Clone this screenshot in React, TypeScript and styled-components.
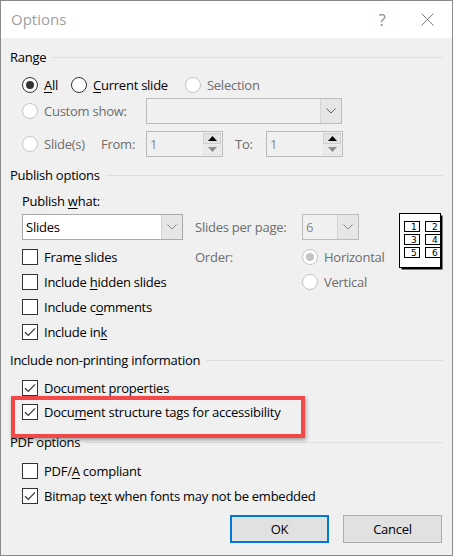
import React from 'react';
import styled, { createGlobalStyle } from 'styled-components';

const GlobalStyle = createGlobalStyle`
  html, body {
    margin: 0;
    padding: 0;
    background: #ffffff;
  }
  * {
    box-sizing: border-box;
  }
`;

const FONT = `"Open Sans", "Noto Sans", "Liberation Sans", sans-serif`;

const Window = styled.div`
  width: 453px;
  height: 556px;
  border: 1px solid #8a8a8a;
  background: #f0f0f0;
  font-family: ${FONT};
  font-size: 13px;
  letter-spacing: -0.25px;
  color: #000;
  display: flex;
  flex-direction: column;
  overflow: hidden;
`;

const TitleBar = styled.div`
  height: 37px;
  background: #ffffff;
  display: flex;
  align-items: center;
  padding-left: 10px;
  flex-shrink: 0;
`;

const Title = styled.div`
  flex: 1;
  font-size: 15px;
  letter-spacing: 0;
  color: #a0a0a0;
  padding-bottom: 2px;
`;

const TitleButton = styled.div<{ $w: number }>`
  width: ${(p) => p.$w}px;
  height: 37px;
  display: flex;
  align-items: center;
  justify-content: center;
  color: #8a8a8a;
  font-size: 16px;
`;

const Body = styled.div`
  padding: 0 9px 0 9px;
  display: flex;
  flex-direction: column;
`;

const Heading = styled.div<{ $mt: number }>`
  height: 20px;
  margin-top: ${(p) => p.$mt}px;
  display: flex;
  align-items: center;
  gap: 6px;
  white-space: nowrap;
  &::after {
    content: '';
    flex: 1;
    height: 1px;
    background: #dedede;
  }
`;

const Indent = styled.div<{ $mt: number }>`
  margin-top: ${(p) => p.$mt}px;
  padding-left: 12px;
  display: flex;
  flex-direction: column;
`;

const Row = styled.div<{ $h: number; $mt?: number }>`
  height: ${(p) => p.$h}px;
  margin-top: ${(p) => p.$mt ?? 0}px;
  display: flex;
  align-items: center;
  white-space: nowrap;
`;

const Label = styled.span<{ $disabled?: boolean; $w?: number; $pl?: number }>`
  color: ${(p) => (p.$disabled ? '#6d6d6d' : '#000')};
  padding-left: ${(p) => p.$pl ?? 0}px;
  ${(p) => (p.$w ? `width: ${p.$w}px; flex-shrink: 0;` : '')}
`;

const Key = styled.span`
  text-decoration: underline;
  text-underline-offset: 2px;
`;

const Option = styled.label<{ $mr?: number }>`
  display: inline-flex;
  align-items: center;
  gap: 6px;
  margin-right: ${(p) => p.$mr ?? 0}px;
  white-space: nowrap;
`;

const RadioCircle = styled.span<{ $checked?: boolean; $disabled?: boolean }>`
  width: 16px;
  height: 16px;
  border-radius: 50%;
  border: 1px solid ${(p) => (p.$disabled ? '#c4c4c4' : '#333')};
  background: #fff;
  display: inline-flex;
  align-items: center;
  justify-content: center;
  flex-shrink: 0;
  &::after {
    content: '';
    width: 8px;
    height: 8px;
    border-radius: 50%;
    background: ${(p) => (p.$disabled ? '#c4c4c4' : '#333')};
    display: ${(p) => (p.$checked ? 'block' : 'none')};
  }
`;

const Box = styled.span`
  width: 16px;
  height: 16px;
  border: 1px solid #333;
  background: #fff;
  display: inline-flex;
  align-items: center;
  justify-content: center;
  flex-shrink: 0;
`;

const Radio: React.FC<{
  checked?: boolean;
  disabled?: boolean;
  mr?: number;
  children: React.ReactNode;
}> = ({ checked, disabled, mr, children }) => (
  <Option $mr={mr}>
    <RadioCircle $checked={checked} $disabled={disabled} />
    <Label $disabled={disabled}>{children}</Label>
  </Option>
);

const Check: React.FC<{ checked?: boolean; children: React.ReactNode }> = ({
  checked,
  children,
}) => (
  <Option>
    <Box>
      {checked && (
        <svg width="12" height="10" viewBox="0 0 12 10">
          <path d="M1 5.2 L4.3 8.4 L11 1.4" fill="none" stroke="#333" strokeWidth="1.2" />
        </svg>
      )}
    </Box>
    <Label>{children}</Label>
  </Option>
);

const Chevron: React.FC<{ color?: string }> = ({ color = '#606060' }) => (
  <svg width="10" height="6" viewBox="0 0 10 6">
    <path d="M0.5 0.5 L5 5 L9.5 0.5" fill="none" stroke={color} strokeWidth="1" />
  </svg>
);

const Combo = styled.div<{ $w: number; $disabled?: boolean }>`
  width: ${(p) => p.$w}px;
  height: 26px;
  border: 1px solid ${(p) => (p.$disabled ? '#bcbcbc' : '#a9a9a9')};
  background: ${(p) => (p.$disabled ? '#f0f0f0' : '#fff')};
  display: flex;
  flex-shrink: 0;
`;

const ComboText = styled.div<{ $disabled?: boolean }>`
  flex: 1;
  display: flex;
  align-items: center;
  padding-left: 3px;
  color: ${(p) => (p.$disabled ? '#8a8a8a' : '#000')};
`;

const ComboButton = styled.div`
  width: 21px;
  background: #e6e6e6;
  border-left: 1px solid #d4d4d4;
  display: flex;
  align-items: center;
  justify-content: center;
`;

const Spinner = styled.div`
  width: 77px;
  height: 26px;
  border: 1px solid #bcbcbc;
  background: #f0f0f0;
  display: flex;
  flex-shrink: 0;
`;

const SpinText = styled.div`
  flex: 1;
  display: flex;
  align-items: center;
  padding-left: 3px;
  color: #8a8a8a;
`;

const SpinButtons = styled.div`
  width: 19px;
  display: flex;
  flex-direction: column;
  padding: 1px 1px 1px 0;
  gap: 1px;
`;

const SpinArrow = styled.div<{ $active?: boolean }>`
  flex: 1;
  background: ${(p) => (p.$active ? '#e3e3e3' : '#ebebeb')};
  border: 1px solid ${(p) => (p.$active ? '#cfcfcf' : '#e3e3e3')};
  display: flex;
  align-items: center;
  justify-content: center;
`;

const Tri: React.FC<{ up?: boolean; color: string }> = ({ up, color }) => (
  <svg width="9" height="5" viewBox="0 0 9 5">
    <path d={up ? 'M0 5 L4.5 0 L9 5 Z' : 'M0 0 L9 0 L4.5 5 Z'} fill={color} />
  </svg>
);

const SpinBox: React.FC<{ value: string }> = ({ value }) => (
  <Spinner>
    <SpinText>{value}</SpinText>
    <SpinButtons>
      <SpinArrow $active>
        <Tri up color="#000" />
      </SpinArrow>
      <SpinArrow>
        <Tri color="#8c8c8c" />
      </SpinArrow>
    </SpinButtons>
  </Spinner>
);

const PublishGrid = styled.div`
  margin-top: 3px;
  display: grid;
  grid-template-columns: 173px 107px 97px 1fr;
  grid-template-rows: 26px 4px 25px 25px 25px 25px;
  align-items: center;
  white-space: nowrap;
`;

const Cell = styled.div<{ $col: number; $row: number; $rowSpan?: number }>`
  grid-column: ${(p) => p.$col};
  grid-row: ${(p) => p.$row} / span ${(p) => p.$rowSpan ?? 1};
  display: flex;
  align-items: center;
`;

const LayoutIcon = styled.div`
  align-self: start;
  margin-top: -1px;
  width: 44px;
  height: 57px;
`;

const Highlight = styled.div`
  position: relative;
  &::after {
    content: '';
    position: absolute;
    left: -11px;
    width: 286px;
    top: -4px;
    height: 34px;
    border: 4px solid #f24848;
    box-shadow: 1px 2px 4px rgba(0, 0, 0, 0.35);
    pointer-events: none;
  }
`;

const Footer = styled.div`
  margin-top: 7px;
  display: flex;
  justify-content: flex-end;
  gap: 14px;
  padding-right: 1px;
`;

const Button = styled.button<{ $primary?: boolean }>`
  width: 99px;
  height: 28px;
  font-family: ${FONT};
  font-size: 13px;
  letter-spacing: -0.25px;
  color: #000;
  background: #e1e1e1;
  border: ${(p) => (p.$primary ? '2px solid #0078d7' : '1px solid #adadad')};
  padding: 0;
  cursor: pointer;
`;

const SlideLayout: React.FC = () => {
  const cells = [1, 2, 3, 4, 5, 6];
  return (
    <svg width="44" height="57" viewBox="0 0 44 57">
      <rect x="2.5" y="2.5" width="41" height="54" fill="#000" />
      <rect x="0.5" y="0.5" width="41" height="54" fill="#fff" stroke="#000" />
      {cells.map((n, i) => {
        const col = i % 2;
        const row = Math.floor(i / 2);
        const x = 5.5 + col * 21;
        const y = 8.5 + row * 13;
        return (
          <g key={n}>
            <rect x={x} y={y} width="15" height="10" fill="#fff" stroke="#000" />
            <text
              x={x + 12}
              y={y + 8.5}
              fontSize="9"
              fontFamily="DejaVu Sans, sans-serif"
              textAnchor="end"
              fill="#000"
            >
              {n}
            </text>
          </g>
        );
      })}
    </svg>
  );
};

export default function App() {
  return (
    <>
      <GlobalStyle />
      <Window>
        <TitleBar>
          <Title>Options</Title>
          <TitleButton $w={40}>?</TitleButton>
          <TitleButton $w={50}>
            <svg width="13" height="13" viewBox="0 0 13 13">
              <path d="M0.5 0.5 L12.5 12.5 M12.5 0.5 L0.5 12.5" stroke="#7a7a7a" strokeWidth="1" />
            </svg>
          </TitleButton>
        </TitleBar>
        <Body>
          <Heading $mt={9}>Range</Heading>
          <Indent $mt={6}>
            <Row $h={24}>
              <Radio checked mr={13}>
                <Key>A</Key>ll
              </Radio>
              <Radio mr={17}>
                <Key>C</Key>urrent slide
              </Radio>
              <Radio disabled>Selection</Radio>
            </Row>
            <Row $h={26} $mt={1}>
              <Option>
                <RadioCircle $disabled />
                <Label $disabled $w={102}>
                  Custom show:
                </Label>
              </Option>
              <Combo $w={196} $disabled>
                <ComboText $disabled />
                <ComboButton>
                  <Chevron />
                </ComboButton>
              </Combo>
            </Row>
            <Row $h={26} $mt={7}>
              <Option>
                <RadioCircle $disabled />
                <Label $disabled $w={57}>
                  Slide(s)
                </Label>
              </Option>
              <Label $disabled $w={45}>
                From:
              </Label>
              <SpinBox value="1" />
              <Label $disabled $w={43} $pl={12}>
                To:
              </Label>
              <SpinBox value="1" />
            </Row>
          </Indent>

          <Heading $mt={8}>Publish options</Heading>
          <Indent $mt={6}>
            <Row $h={20}>
              <Label>
                Publish <Key>w</Key>hat:
              </Label>
            </Row>
            <PublishGrid>
              <Cell $col={1} $row={1}>
                <Combo $w={161}>
                  <ComboText>Slides</ComboText>
                  <ComboButton>
                    <Chevron color="#8a8a8a" />
                  </ComboButton>
                </Combo>
              </Cell>
              <Cell $col={2} $row={1}>
                <Label $disabled>Slides per page:</Label>
              </Cell>
              <Cell $col={3} $row={1}>
                <Combo $w={57} $disabled>
                  <ComboText $disabled>6</ComboText>
                  <ComboButton>
                    <Chevron color="#8a8a8a" />
                  </ComboButton>
                </Combo>
              </Cell>
              <Cell $col={4} $row={1} $rowSpan={3}>
                <LayoutIcon>
                  <SlideLayout />
                </LayoutIcon>
              </Cell>
              <Cell $col={1} $row={3}>
                <Check>
                  Fram<Key>e</Key> slides
                </Check>
              </Cell>
              <Cell $col={2} $row={3}>
                <Label $disabled>Order:</Label>
              </Cell>
              <Cell $col={3} $row={3}>
                <Radio checked disabled>
                  Horizontal
                </Radio>
              </Cell>
              <Cell $col={1} $row={4}>
                <Check>
                  Include <Key>h</Key>idden slides
                </Check>
              </Cell>
              <Cell $col={3} $row={4}>
                <Radio disabled>Vertical</Radio>
              </Cell>
              <Cell $col={1} $row={5}>
                <Check>
                  Include c<Key>o</Key>mments
                </Check>
              </Cell>
              <Cell $col={1} $row={6}>
                <Check checked>
                  Include in<Key>k</Key>
                </Check>
              </Cell>
            </PublishGrid>
          </Indent>

          <Heading $mt={6}>Include non-printing information</Heading>
          <Indent $mt={6}>
            <Row $h={24}>
              <Check checked>Document properties</Check>
            </Row>
            <Highlight>
              <Row $h={24}>
                <Check checked>
                  Docu<Key>m</Key>ent structure tags for accessibility
                </Check>
              </Row>
            </Highlight>
          </Indent>

          <Heading $mt={8}>PDF options</Heading>
          <Indent $mt={6}>
            <Row $h={25}>
              <Check>
                PDF/<Key>A</Key> compliant
              </Check>
            </Row>
            <Row $h={25}>
              <Check checked>
                Bitmap te<Key>x</Key>t when fonts may not be embedded
              </Check>
            </Row>
          </Indent>

          <Footer>
            <Button $primary>OK</Button>
            <Button>Cancel</Button>
          </Footer>
        </Body>
      </Window>
    </>
  );
}
